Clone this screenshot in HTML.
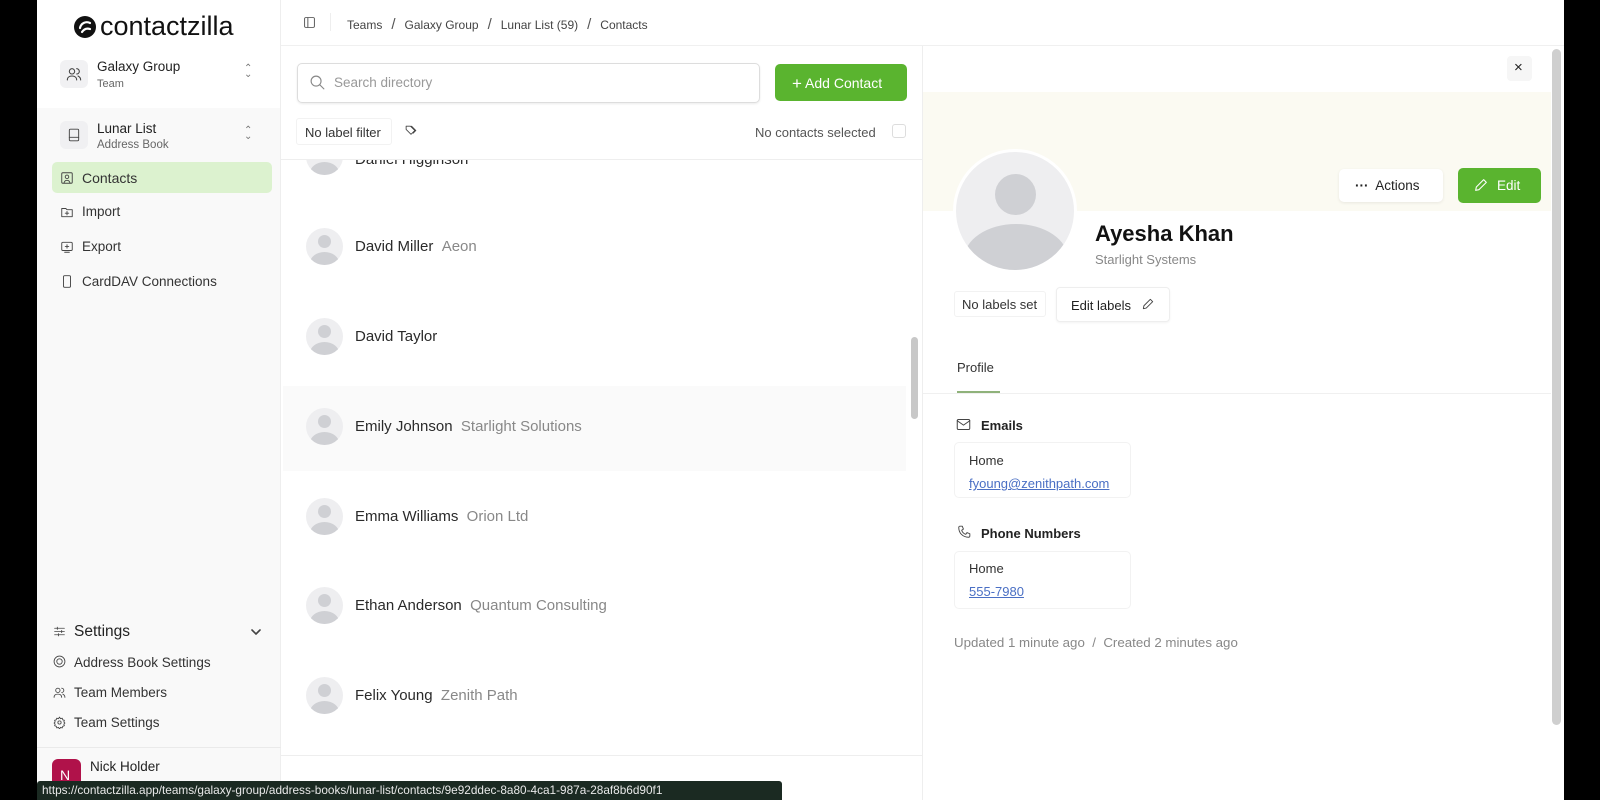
<!DOCTYPE html>
<html><head><meta charset="utf-8"><style>
*{box-sizing:border-box;margin:0;padding:0}
body{width:1600px;height:800px;overflow:hidden;background:#000;font-family:"Liberation Sans",sans-serif;color:#222;position:relative}
.a{position:absolute}
.t{position:absolute;white-space:nowrap;line-height:1}
svg{position:absolute;fill:none;stroke:#444;stroke-width:1.6;stroke-linecap:round;stroke-linejoin:round}
.av{position:absolute;width:37px;height:37px;border-radius:50%;background:#eeeef0;overflow:hidden}
.av:before{content:"";position:absolute;left:12px;top:7px;width:13px;height:13px;border-radius:50%;background:#cfd0d4}
.av:after{content:"";position:absolute;left:4px;top:24px;width:29px;height:22px;border-radius:50%;background:#cfd0d4}
.nm{font-size:15px;color:#2a2a2a}
.co{font-size:15px;color:#888}
.sb{font-size:13.5px;color:#333}
.sl{font-size:15px;color:#555;margin:0 9px}
</style></head><body>
<div class="a" style="left:37px;top:0;width:1527px;height:800px;background:#fff"></div>
<div class="a" style="left:37px;top:0;width:244px;height:800px;background:#fff;border-right:1px solid #eee"></div>
<div class="a" style="left:37px;top:108px;width:244px;height:692px;background:#f9f9f9;border-right:1px solid #eee"></div>
<svg style="left:73px;top:15px;width:24px;height:24px" viewBox="0 0 24 24"><circle cx="12" cy="12" r="11" fill="#111" stroke="none"/><path d="M7 13c1-5 6-7 10-5M9 17c2-3 5-4 8-3" stroke="#fff" stroke-width="2.2"/></svg>
<div class="t" style="left:100px;top:13px;font-size:27px;color:#111">contactzilla</div>
<div class="a" style="left:60px;top:60px;width:28px;height:28px;background:#f1f1f3;border-radius:6px"></div>
<svg style="left:66px;top:66px;width:16px;height:16px" viewBox="0 0 24 24"><circle cx="9" cy="8" r="4"/><path d="M2 21c0-4 3-6 7-6s7 2 7 6M16 4a4 4 0 0 1 0 8M22 21c0-3-2-5-4-6"/></svg>
<div class="t" style="left:97px;top:60px;font-size:13.5px;color:#222">Galaxy Group</div>
<div class="t" style="left:97px;top:79px;font-size:11px;color:#666">Team</div>
<div class="t" style="left:244px;top:66px;font-size:10px;color:#777;line-height:6px">⌃<br>⌄</div>
<div class="a" style="left:60px;top:121px;width:28px;height:28px;background:#f0f0f2;border-radius:6px"></div>
<svg style="left:67px;top:128px;width:14px;height:14px" viewBox="0 0 24 24"><rect x="4" y="2" width="16" height="20" rx="2"/><path d="M4 16h16"/></svg>
<div class="t" style="left:97px;top:122px;font-size:13.5px;color:#222">Lunar List</div>
<div class="t" style="left:97px;top:140px;font-size:11.5px;color:#666">Address Book</div>
<div class="t" style="left:244px;top:128px;font-size:10px;color:#777;line-height:6px">⌃<br>⌄</div>
<div class="a" style="left:52px;top:162px;width:220px;height:31px;background:#dcf2cf;border-radius:5px"></div>
<svg style="left:60px;top:171px;width:14px;height:14px" viewBox="0 0 24 24"><rect x="3" y="3" width="18" height="18" rx="2"/><circle cx="12" cy="10" r="3"/><path d="M7 20c1-3 3-4 5-4s4 1 5 4"/></svg>
<div class="t sb" style="left:82px;top:171px;font-size:14px">Contacts</div>
<svg style="left:60px;top:205px;width:14px;height:14px" viewBox="0 0 24 24"><path d="M3 6h7l2 2h9v12H3z M12 11v6M9 14h6"/></svg>
<div class="t sb" style="left:82px;top:205px">Import</div>
<svg style="left:60px;top:240px;width:14px;height:14px" viewBox="0 0 24 24"><rect x="3" y="4" width="18" height="14" rx="2"/><path d="M12 8v6M9 11h6M8 21h8"/></svg>
<div class="t sb" style="left:82px;top:240px">Export</div>
<svg style="left:60px;top:274px;width:14px;height:15px" viewBox="0 0 24 24"><rect x="6" y="2" width="12" height="20" rx="2"/></svg>
<div class="t sb" style="left:82px;top:275px">CardDAV Connections</div>
<svg style="left:53px;top:625px;width:13px;height:13px" viewBox="0 0 24 24"><path d="M3 6h18M3 12h18M3 18h18M8 4v4M16 10v4M10 16v4"/></svg>
<div class="t" style="left:74px;top:624px;font-size:15.5px;color:#222">Settings</div>
<svg style="left:251px;top:628px;width:10px;height:8px" viewBox="0 0 10 8"><path d="M1 2l4 4 4-4"/></svg>
<svg style="left:53px;top:655px;width:13px;height:13px" viewBox="0 0 24 24"><circle cx="12" cy="12" r="10"/><circle cx="12" cy="12" r="5"/></svg>
<div class="t sb" style="left:74px;top:656px">Address Book Settings</div>
<svg style="left:53px;top:686px;width:13px;height:13px" viewBox="0 0 24 24"><circle cx="9" cy="8" r="4"/><path d="M2 21c0-4 3-6 7-6s7 2 7 6M16 4a4 4 0 0 1 0 8M22 21c0-3-2-5-4-6"/></svg>
<div class="t sb" style="left:74px;top:686px">Team Members</div>
<svg style="left:53px;top:716px;width:13px;height:13px" viewBox="0 0 24 24"><circle cx="12" cy="12" r="3"/><path d="M12 2l2 3 3-1 1 3 3 1-1 3 2 2-2 2 1 3-3 1-1 3-3-1-2 3-2-3-3 1-1-3-3-1 1-3-2-2 2-2-1-3 3-1 1-3 3 1z"/></svg>
<div class="t sb" style="left:74px;top:716px">Team Settings</div>
<div class="a" style="left:37px;top:747px;width:244px;height:1px;background:#eaeaea"></div>
<div class="a" style="left:52px;top:759px;width:29px;height:30px;background:#b0124a;border-radius:6px"></div>
<div class="t" style="left:60px;top:768px;font-size:14px;color:#fff">N</div>
<div class="t" style="left:90px;top:760px;font-size:13.5px;color:#222">Nick Holder</div>
<!-- header -->
<svg style="left:303px;top:16px;width:13px;height:13px" viewBox="0 0 24 24"><rect x="3" y="3" width="18" height="18" rx="2"/><path d="M9 3v18"/></svg>
<div class="a" style="left:330px;top:13px;width:1px;height:18px;background:#eee"></div>
<div class="t" style="left:347px;top:17px;font-size:12px;color:#444">Teams<span class="sl">/</span>Galaxy Group<span class="sl">/</span>Lunar List (59)<span class="sl">/</span>Contacts</div>
<div class="a" style="left:281px;top:45px;width:1283px;height:1px;background:#f0f0f0"></div>
<!-- list panel -->
<div class="a" style="left:297px;top:63px;width:463px;height:40px;border:1px solid #ddd;border-radius:5px;box-shadow:0 1px 2px rgba(0,0,0,.08)"></div>
<svg style="left:309px;top:74px;width:17px;height:17px;stroke:#888" viewBox="0 0 24 24"><circle cx="10" cy="10" r="7"/><path d="M15 15l6 6"/></svg>
<div class="t" style="left:334px;top:76px;font-size:13.5px;color:#999">Search directory</div>
<div class="a" style="left:775px;top:64px;width:132px;height:37px;background:#5ab42f;border-radius:5px"></div>
<div class="t" style="left:792px;top:74px;font-size:14px;color:#fff"><span style="font-size:17px;position:relative;top:1px">+</span> Add Contact</div>
<div class="a" style="left:296px;top:118px;width:96px;height:27px;border:1px solid #f2f2f2;border-radius:3px"></div>
<div class="t" style="left:305px;top:126px;font-size:13px;color:#333">No label filter</div>
<svg style="left:404px;top:124px;width:14px;height:13px" viewBox="0 0 24 24"><path d="M3 4h8l8 8-7 7-9-9z M13 4l8 8-5 5"/></svg>
<div class="t" style="left:755px;top:126px;font-size:13px;color:#555">No contacts selected</div>
<div class="a" style="left:892px;top:124px;width:14px;height:14px;border:1px solid #ddd;border-radius:3px"></div>
<div class="a" style="left:281px;top:159px;width:641px;height:1px;background:#eee"></div>
<div class="a" style="left:283px;top:160px;width:623px;height:595px;overflow:hidden">
 <div class="av" style="left:23px;top:-22px"></div>
 <div class="t nm" style="left:72px;top:-8px">Daniel Higginson</div>
</div>
<div class="av" style="left:306px;top:228px"></div><div class="t nm" style="left:355px;top:239px">David Miller &nbsp;<span class="co">Aeon</span></div>
<div class="av" style="left:306px;top:318px"></div><div class="t nm" style="left:355px;top:329px">David Taylor</div>
<div class="a" style="left:283px;top:386px;width:623px;height:85px;background:#fafafa"></div>
<div class="av" style="left:306px;top:408px"></div><div class="t nm" style="left:355px;top:419px">Emily Johnson &nbsp;<span class="co">Starlight Solutions</span></div>
<div class="av" style="left:306px;top:498px"></div><div class="t nm" style="left:355px;top:509px">Emma Williams &nbsp;<span class="co">Orion Ltd</span></div>
<div class="av" style="left:306px;top:587px"></div><div class="t nm" style="left:355px;top:598px">Ethan Anderson &nbsp;<span class="co">Quantum Consulting</span></div>
<div class="av" style="left:306px;top:677px"></div><div class="t nm" style="left:355px;top:688px">Felix Young &nbsp;<span class="co">Zenith Path</span></div>
<div class="a" style="left:911px;top:337px;width:7px;height:82px;background:#c8c8c8;border-radius:4px"></div>
<div class="a" style="left:281px;top:755px;width:641px;height:1px;background:#eee"></div>
<div class="a" style="left:922px;top:46px;width:1px;height:754px;background:#eee"></div>
<!-- detail -->
<div class="a" style="left:923px;top:92px;width:628px;height:119px;background:#fbfaf2"></div>
<div class="a" style="left:1507px;top:56px;width:25px;height:25px;background:#f6f6f6;border-radius:4px"></div>
<div class="t" style="left:1514px;top:60px;font-size:15px;color:#222">×</div>
<div class="a" style="left:953px;top:149px;width:124px;height:124px;border-radius:50%;background:#eeeef0;border:3px solid #fff;overflow:hidden">
 <div class="a" style="left:39px;top:22px;width:41px;height:41px;border-radius:50%;background:#cfd0d4"></div>
 <div class="a" style="left:8px;top:72px;width:104px;height:70px;border-radius:50%;background:#cfd0d4"></div>
</div>
<div class="t" style="left:1095px;top:223px;font-size:22px;font-weight:bold;color:#111">Ayesha Khan</div>
<div class="t" style="left:1095px;top:253px;font-size:13px;color:#888">Starlight Systems</div>
<div class="a" style="left:1339px;top:169px;width:104px;height:33px;background:#fff;border-radius:5px;box-shadow:0 1px 3px rgba(0,0,0,.08)"></div>
<div class="t" style="left:1355px;top:179px;font-size:13.5px;color:#222"><b>···</b>&nbsp; Actions</div>
<div class="a" style="left:1458px;top:168px;width:83px;height:35px;background:#5ab42f;border-radius:5px"></div>
<svg style="left:1473px;top:177px;width:16px;height:16px;stroke:#fff" viewBox="0 0 24 24"><path d="M4 20l1-5L16 4l4 4L9 19z"/></svg>
<div class="t" style="left:1497px;top:179px;font-size:13.5px;color:#fff">Edit</div>
<div class="a" style="left:954px;top:291px;width:92px;height:26px;border:1px solid #f2f2f2;border-radius:3px"></div>
<div class="t" style="left:962px;top:298px;font-size:13px;color:#333">No labels set</div>
<div class="a" style="left:1056px;top:287px;width:114px;height:35px;border:1px solid #eee;border-radius:4px;box-shadow:0 1px 2px rgba(0,0,0,.05)"></div>
<div class="t" style="left:1071px;top:299px;font-size:13px;color:#222">Edit labels</div>
<svg style="left:1141px;top:297px;width:14px;height:14px" viewBox="0 0 24 24"><path d="M4 20l1-5L16 4l4 4L9 19z"/></svg>
<div class="t" style="left:957px;top:361px;font-size:13px;color:#333">Profile</div>
<div class="a" style="left:923px;top:393px;width:628px;height:1px;background:#f0f0f0"></div>
<div class="a" style="left:957px;top:391px;width:43px;height:2px;background:#8fb27a"></div>
<svg style="left:956px;top:418px;width:15px;height:13px" viewBox="0 0 24 20"><rect x="2" y="2" width="20" height="16" rx="2"/><path d="M2 4l10 7 10-7"/></svg>
<div class="t" style="left:981px;top:419px;font-size:13px;font-weight:bold;color:#222">Emails</div>
<div class="a" style="left:954px;top:442px;width:177px;height:56px;border:1px solid #f2f2f2;border-radius:5px"></div>
<div class="t" style="left:969px;top:454px;font-size:13px;color:#333">Home</div>
<div class="t" style="left:969px;top:477px;font-size:13px;color:#4a6fc4;text-decoration:underline">fyoung@zenithpath.com</div>
<svg style="left:957px;top:525px;width:14px;height:14px" viewBox="0 0 24 24"><path d="M5 2h4l2 5-3 2c1 3 4 6 7 7l2-3 5 2v4c0 1-1 2-2 2C10 21 3 14 3 4c0-1 1-2 2-2z"/></svg>
<div class="t" style="left:981px;top:527px;font-size:13px;font-weight:bold;color:#222">Phone Numbers</div>
<div class="a" style="left:954px;top:551px;width:177px;height:58px;border:1px solid #f2f2f2;border-radius:5px"></div>
<div class="t" style="left:969px;top:562px;font-size:13px;color:#333">Home</div>
<div class="t" style="left:969px;top:585px;font-size:13px;color:#4a6fc4;text-decoration:underline">555-7980</div>
<div class="t" style="left:954px;top:636px;font-size:13.3px;color:#888">Updated 1 minute ago &nbsp;/&nbsp; Created 2 minutes ago</div>
<div class="a" style="left:1552px;top:49px;width:9px;height:676px;background:#cfcfcf;border-radius:5px"></div>
<div class="a" style="left:37px;top:781px;width:745px;height:19px;background:#1b2a22;border-radius:3px 3px 0 0"></div>
<div class="t" style="left:42px;top:785px;font-size:11.8px;color:#e8e8e8">https://contactzilla.app/teams/galaxy-group/address-books/lunar-list/contacts/9e92ddec-8a80-4ca1-987a-28af8b6d90f1</div>
</body></html>
